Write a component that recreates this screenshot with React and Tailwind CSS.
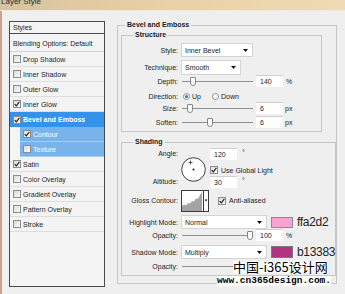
import React from "react";

function Cb({ checked }) {
  return (
    <span className="flex h-[8px] w-[8px] shrink-0 items-center justify-center border border-[#8d8d8d] bg-gradient-to-br from-[#dadada] to-[#fbfbfb]">
      {checked ? (
        <svg width="6" height="6" viewBox="0 0 6 6">
          <path d="M0.7 3.1L2.3 4.8L5.4 0.9" stroke="#1d1d1d" strokeWidth="1.1" fill="none" />
        </svg>
      ) : null}
    </span>
  );
}

function Radio({ on }) {
  return (
    <span className="flex h-[7px] w-[7px] shrink-0 items-center justify-center rounded-full border border-[#8a8a8a] bg-white">
      {on ? <span className="h-[3px] w-[3px] rounded-full bg-[#2a6fb8]" /> : null}
    </span>
  );
}

function Arrow() {
  return (
    <svg width="5" height="3" viewBox="0 0 5 3">
      <path d="M0 0H5L2.5 3Z" fill="#111" />
    </svg>
  );
}

function Handle() {
  return <span className="h-[9px] w-[6px] shrink-0 rounded-b-[3px] rounded-t-[1px] border border-[#858585] bg-white" />;
}

function Input({ v }) {
  return (
    <div className="flex h-[12px] w-[27px] shrink-0 items-center border-t border-[#cfcfcf] bg-white pl-[4px]">{v}</div>
  );
}

const items = [
  { t: "Drop Shadow" },
  { t: "Inner Shadow" },
  { t: "Outer Glow" },
  { t: "Inner Glow", c: true },
  { t: "Bevel and Emboss", c: true, sel: true },
  { t: "Contour", c: true, sub: true },
  { t: "Texture", sub: true },
  { t: "Satin", c: true },
  { t: "Color Overlay" },
  { t: "Gradient Overlay" },
  { t: "Pattern Overlay" },
  { t: "Stroke" },
];

export default function App() {
  return (
    <div className="relative flex h-[294px] w-[345px] flex-col overflow-hidden bg-[#efefef] font-['Liberation_Sans',Arial,sans-serif] text-[7px] leading-[9px] text-[#1c1c1c]">
      {/* title bar */}
      <div className="h-[11px] shrink-0 overflow-hidden border-b border-[#f3e9d6] bg-gradient-to-r from-[#d6c39f] via-[#e8d2a7] to-[#eddbb7]">
        <span className="-mt-[3px] block pl-[1px] text-[8px] leading-[10px] text-[#2a2a2a]">Layer Style</span>
      </div>

      <div className="flex flex-1 border-l-2 border-[#c9a38f]">
        {/* styles list */}
        <div className="ml-[7px] mt-[10px] flex h-[266px] w-[96px] shrink-0 flex-col border border-[#4a4a4a] bg-[#f4f4f4]">
          <div className="flex h-[12px] shrink-0 items-center border-b border-[#4a4a4a] pl-[3px]">Styles</div>
          <div className="flex h-[18px] shrink-0 items-center border-b border-[#d2d2d2] pl-[3px] pt-[2px]">
            Blending Options: Default
          </div>
          {items.map((it) =>
            it.sub ? (
              <div key={it.t} className="flex h-[15px] shrink-0 pl-[10px]">
                <div className="flex flex-1 items-center gap-[2px] border-b border-[#a6cdf2] bg-[#78b3ec] pl-[3px] text-white">
                  <Cb checked={it.c} />
                  <span>{it.t}</span>
                </div>
              </div>
            ) : it.sel ? (
              <div key={it.t} className="flex h-[15px] shrink-0 items-center gap-[2px] bg-[#3592ea] pl-[3px] font-bold text-white">
                <Cb checked />
                <span>{it.t}</span>
              </div>
            ) : (
              <div key={it.t} className="flex h-[15px] shrink-0 items-center gap-[2px] border-b border-[#dedede] pl-[3px]">
                <Cb checked={it.c} />
                <span>{it.t}</span>
              </div>
            )
          )}
        </div>

        {/* main group */}
        <fieldset className="ml-[12px] mt-[9px] h-fit w-[211px] shrink-0 border border-[#c6c6c6] pb-[7px] pl-[3px]">
          <legend className="ml-[4px] px-[2px] text-[7px] font-bold leading-[10px]">Bevel and Emboss</legend>

          {/* Structure */}
          <fieldset className="w-[201px] border border-[#c6c6c6] pb-[3px] pt-[3px]">
            <legend className="ml-[11px] px-[2px] font-bold leading-[10px]">Structure</legend>

            <div className="flex h-[14px] items-center">
              <span className="w-[56px] shrink-0 text-right">Style:</span>
              <div className="ml-[3px] flex h-[14px] w-[72px] items-center justify-between border border-[#d4d4d4] bg-white pl-[3px] pr-[4px]">
                <span>Inner Bevel</span>
                <Arrow />
              </div>
            </div>

            <div className="mt-[3px] flex h-[15px] items-center">
              <span className="w-[56px] shrink-0 text-right">Technique:</span>
              <div className="ml-[3px] flex h-[15px] w-[60px] items-center justify-between border border-[#d4d4d4] bg-white pl-[3px] pr-[4px]">
                <span>Smooth</span>
                <Arrow />
              </div>
            </div>

            <div className="flex h-[12px] items-center">
              <span className="w-[56px] shrink-0 text-right">Depth:</span>
              <div className="ml-[4px] flex w-[71px] items-center">
                <span className="h-px w-[8px] bg-[#8f8f8f]" />
                <Handle />
                <span className="h-px flex-1 bg-[#8f8f8f]" />
              </div>
              <div className="ml-[3px]">
                <Input v="140" />
              </div>
              <span className="ml-[3px]">%</span>
            </div>

            <div className="mt-[3px] flex h-[12px] items-center">
              <span className="w-[56px] shrink-0 text-right">Direction:</span>
              <span className="ml-[5px]">
                <Radio on />
              </span>
              <span className="ml-[2px]">Up</span>
              <span className="ml-[11px]">
                <Radio />
              </span>
              <span className="ml-[2px]">Down</span>
            </div>

            <div className="flex h-[12px] items-center">
              <span className="w-[56px] shrink-0 text-right">Size:</span>
              <div className="ml-[4px] flex w-[71px] items-center">
                <span className="h-px w-[5px] bg-[#8f8f8f]" />
                <Handle />
                <span className="h-px flex-1 bg-[#8f8f8f]" />
              </div>
              <div className="ml-[3px]">
                <Input v="6" />
              </div>
              <span className="ml-[2px]">px</span>
            </div>

            <div className="mt-[2px] flex h-[12px] items-center">
              <span className="w-[56px] shrink-0 text-right">Soften:</span>
              <div className="ml-[4px] flex w-[71px] items-center">
                <span className="h-px w-[25px] bg-[#8f8f8f]" />
                <Handle />
                <span className="h-px flex-1 bg-[#8f8f8f]" />
              </div>
              <div className="ml-[3px]">
                <Input v="6" />
              </div>
              <span className="ml-[2px]">px</span>
            </div>
          </fieldset>

          {/* Shading */}
          <fieldset className="mt-[5px] w-[201px] border border-[#c6c6c6] pb-[3px] pt-[1px]">
            <legend className="ml-[11px] px-[2px] font-bold leading-[10px]">Shading</legend>

            <div className="flex h-[40px]">
              <div className="flex w-[56px] shrink-0 flex-col justify-between text-right">
                <span className="leading-[12px]">Angle:</span>
                <span className="leading-[12px]">Altitude:</span>
              </div>
              <svg width="25" height="25" viewBox="0 0 25 25" className="ml-[3px] mt-[9px] shrink-0">
                <circle cx="12.5" cy="12.5" r="11.8" fill="#fff" stroke="#2b2b2b" strokeWidth="0.9" />
                <path d="M9.5 3.5v4M7.5 5.5h4" stroke="#333" strokeWidth="0.8" />
                <circle cx="12.5" cy="12.5" r="1" fill="#111" />
              </svg>
              <div className="ml-[4px] flex flex-col">
                <div className="flex items-center">
                  <Input v="120" />
                  <span className="ml-[5px] -mt-[3px]">°</span>
                </div>
                <div className="mt-[4px] flex h-[12px] items-center gap-[3px]">
                  <Cb checked />
                  <span>Use Global Light</span>
                </div>
                <div className="flex items-center">
                  <Input v="30" />
                  <span className="ml-[5px] -mt-[3px]">°</span>
                </div>
              </div>
            </div>

            <div className="mt-[2px] flex h-[21px] items-center">
              <span className="w-[56px] shrink-0 text-right">Gloss Contour:</span>
              <svg width="28" height="22" viewBox="0 0 28 22" className="ml-[3px] shrink-0">
                <rect x="0.5" y="0.5" width="27" height="21" fill="#fff" stroke="#3a3a3a" />
                <path
                  d="M1 21V16L3 14.5L5 15.5L7 13L9 13.5L11 11L13 11.5L15 8.5L17 9L19 5L21 2V21Z"
                  fill="#a3a3a3"
                />
                <line x1="22.5" y1="1" x2="22.5" y2="21" stroke="#3a3a3a" />
                <path d="M23.6 9.5H26.4L25 11.5Z" fill="#111" />
              </svg>
              <span className="ml-[9px]">
                <Cb checked />
              </span>
              <span className="ml-[3px]">Anti-aliased</span>
            </div>

            <div className="mt-[4px] flex h-[14px] items-center">
              <span className="w-[56px] shrink-0 text-right">Highlight Mode:</span>
              <div className="ml-[3px] flex h-[14px] w-[86px] shrink-0 items-center justify-between border border-[#d4d4d4] bg-white pl-[3px] pr-[4px]">
                <span>Normal</span>
                <Arrow />
              </div>
              <span className="ml-[4px] h-[11px] w-[22px] shrink-0 border border-[#8c8c8c] bg-[#f7a3d3]" />
              <span className="ml-[4px] whitespace-nowrap text-[12px] leading-[14px] tracking-[-0.3px] text-[#222]">ffa2d2</span>
            </div>

            <div className="flex h-[12px] items-center">
              <span className="w-[56px] shrink-0 text-right">Opacity:</span>
              <div className="ml-[4px] flex w-[71px] items-center">
                <span className="h-px w-[65px] bg-[#8f8f8f]" />
                <Handle />
                <span className="h-px flex-1 bg-[#8f8f8f]" />
              </div>
              <div className="ml-[3px]">
                <Input v="100" />
              </div>
              <span className="ml-[3px]">%</span>
            </div>

            <div className="mt-[4px] flex h-[14px] items-center">
              <span className="w-[56px] shrink-0 text-right">Shadow Mode:</span>
              <div className="ml-[3px] flex h-[14px] w-[86px] shrink-0 items-center justify-between border border-[#d4d4d4] bg-white pl-[3px] pr-[4px]">
                <span>Multiply</span>
                <Arrow />
              </div>
              <span className="ml-[4px] h-[12px] w-[22px] shrink-0 border border-[#7a7a7a] bg-[#b13383]" />
              <span className="ml-[4px] whitespace-nowrap text-[12px] leading-[12px] tracking-[-0.3px] text-[#222]">b13383</span>
            </div>

            <div className="mt-[1px] flex h-[12px] items-center">
              <span className="w-[56px] shrink-0 text-right">Opacity:</span>
              <div className="ml-[4px] flex w-[71px] items-center">
                <span className="h-px w-[65px] bg-[#8f8f8f]" />
                <span className="invisible">
                  <Handle />
                </span>
                <span className="h-px flex-1 bg-[#8f8f8f]" />
              </div>
              <div className="invisible ml-[3px]">
                <Input v="100" />
              </div>
              <span className="invisible ml-[3px]">%</span>
            </div>
          </fieldset>
        </fieldset>

        {/* buttons */}
        <div className="ml-[12px] mt-[11px] flex shrink-0 flex-col">
          <div className="h-[12px] w-[20px] rounded-[2px] border border-[#3c7fb1] bg-[#dcecfb]" />
          <div className="mt-[6px] h-[12px] w-[20px] rounded-[2px] border border-[#8a8a8a] bg-[#e6e6e6]" />
          <div className="mt-[7px] h-[12px] w-[20px] rounded-[2px] border border-[#8a8a8a] bg-[#e6e6e6]" />
        </div>
      </div>

      {/* watermark */}
      <span className="absolute left-[233px] top-[261px] bg-white font-['Noto_Sans_CJK_SC',sans-serif] text-[13px] leading-[12px] text-black">
        中国-i365设计网
      </span>
      <span className="absolute left-[217px] top-[276px] bg-white font-['Liberation_Mono',monospace] text-[9.5px] font-bold leading-[10px] text-black">
        www.cn365design.com.
      </span>
    </div>
  );
}
